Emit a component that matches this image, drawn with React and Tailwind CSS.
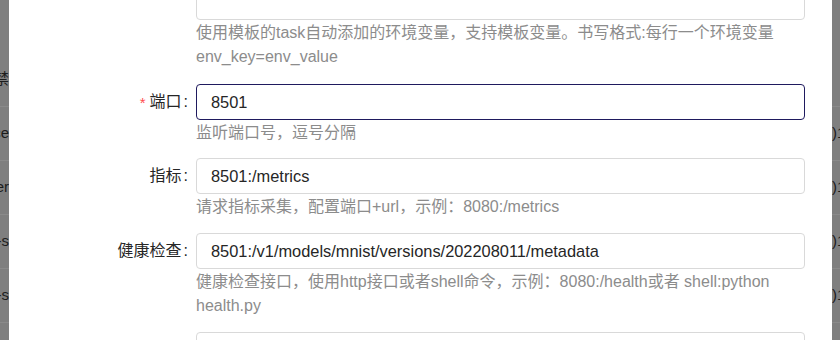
import React from 'react';

const FONT = { fontFamily: '"Liberation Sans", "Noto Sans CJK SC", sans-serif' };

const leftRows = [
  { text: '', h: 'h-[53px]', border: false },
  { text: '是否禁', h: 'h-[54px]', border: true },
  { text: 'service', h: 'h-[54px]', border: true },
  { text: 'server', h: 'h-[54px]', border: true },
  { text: 'tf-s', h: 'h-[54px]', border: true },
  { text: 'tf-s', h: 'h-[54px]', border: true },
  { text: '', h: 'h-[54px]', border: false },
];

const rightRows = [
  { text: '', h: 'h-[53px]', border: false },
  { text: '', h: 'h-[54px]', border: true },
  { text: ')1', h: 'h-[54px]', border: true },
  { text: ')1', h: 'h-[54px]', border: true },
  { text: ')1', h: 'h-[54px]', border: true },
  { text: ')1', h: 'h-[54px]', border: true },
  { text: '', h: 'h-[54px]', border: false },
];

const FormItem = ({ label, required, value, focused, help, className = '' }) => (
  <div className={`flex ${className}`}>
    <div className="w-[187px] h-[36px] flex items-center justify-end shrink-0 text-[16px] text-[#262626]">
      {required && <span className="text-[#ff4d4f] mr-[4px] text-[15px] leading-none">*</span>}
      {label && <span>{label}</span>}
      {label && <span className="ml-[2px] mr-[8px]">:</span>}
    </div>
    <div className="w-[609px] shrink-0">
      <div
        className={`h-[36px] rounded-[4px] border flex items-center pl-[14px] text-[16.4px] text-[#262626] bg-white ${
          focused ? 'border-[#1f1a5e]' : 'border-[#d9d9d9]'
        }`}
      >
        {value}
      </div>
      {help && <div className="text-[16px] leading-[24px] text-[#8c8c8c] pt-[1px]">{help}</div>}
    </div>
  </div>
);

const Strip = ({ rows, side, width }) => (
  <div className={`${width} shrink-0 bg-[#7f7f7f] overflow-hidden`}>
    {rows.map((r, i) => (
      <div
        key={i}
        className={`${r.h} flex items-center whitespace-nowrap text-[15px] text-[#1c1c1c] ${
          side === 'left' ? 'justify-end' : 'justify-start'
        } ${r.border ? 'border-b border-[#8a8a8a]' : ''}`}
      >
        {r.text}
      </div>
    ))}
  </div>
);

export default function App() {
  return (
    <div className="w-[840px] h-[340px] flex overflow-hidden bg-white" style={FONT}>
      <Strip rows={leftRows} side="left" width="w-[9px]" />
      <div className="w-[823px] shrink-0 bg-white overflow-hidden">
        <div className="mt-[-16px]">
          <FormItem
            value=""
            help="使用模板的task自动添加的环境变量，支持模板变量。书写格式:每行一个环境变量 env_key=env_value"
            className="mb-[15px]"
          />
          <FormItem label="端口" required value="8501" focused help="监听端口号，逗号分隔" className="mb-[13px]" />
          <FormItem
            label="指标"
            value="8501:/metrics"
            help="请求指标采集，配置端口+url，示例：8080:/metrics"
            className="mb-[14px]"
          />
          <FormItem
            label="健康检查"
            value="8501:/v1/models/mnist/versions/202208011/metadata"
            help="健康检查接口，使用http接口或者shell命令，示例：8080:/health或者 shell:python health.py"
            className="mb-[14px]"
          />
          <FormItem value="" />
        </div>
      </div>
      <Strip rows={rightRows} side="right" width="w-[8px]" />
    </div>
  );
}
